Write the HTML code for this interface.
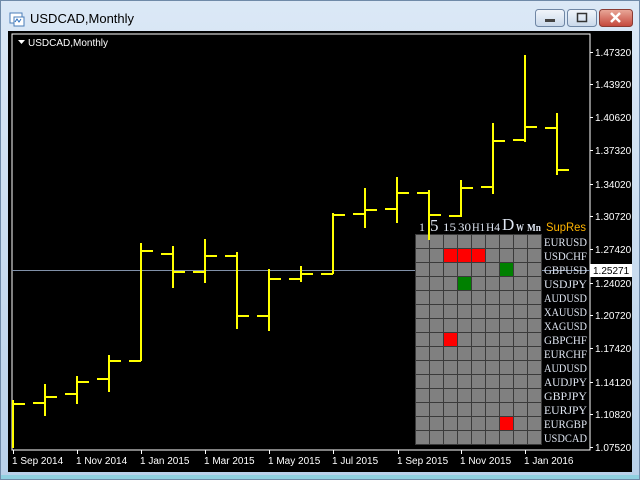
<!DOCTYPE html>
<html><head><meta charset="utf-8"><style>
body{margin:0;width:640px;height:480px;overflow:hidden;background:#c4d8ee;font-family:"Liberation Sans",sans-serif}
</style></head><body>
<svg width="640" height="480" xmlns="http://www.w3.org/2000/svg" style="position:absolute;left:0;top:0">
<defs>
<linearGradient id="tb" x1="0" y1="0" x2="0" y2="1"><stop offset="0" stop-color="#dbe8f6"/><stop offset="1" stop-color="#b9d1ea"/></linearGradient>
<linearGradient id="btn" x1="0" y1="0" x2="0" y2="1"><stop offset="0" stop-color="#f2f6fb"/><stop offset="1" stop-color="#c9d8ea"/></linearGradient>
<linearGradient id="cls" x1="0" y1="0" x2="0" y2="1"><stop offset="0" stop-color="#e9a99a"/><stop offset="1" stop-color="#c4463a"/></linearGradient>
</defs>
<rect x="0" y="0" width="640" height="480" fill="url(#tb)"/>
<rect x="0.5" y="0.5" width="639" height="479" fill="none" stroke="#6f8aa8"/>
<rect x="1" y="475" width="638" height="4" fill="#8fd0e0"/>
<rect x="10" y="13" width="12" height="10" fill="#fff" stroke="#4a7db8"/>
<rect x="14" y="17" width="10" height="9" fill="#fff" stroke="#4a7db8"/>
<path d="M15 22 l2 -3 l2 3 l2 -3" stroke="#2a6fc0" fill="none"/>
<text x="30" y="23" font-size="13" fill="#000">USDCAD,Monthly</text>
<rect x="535.5" y="9.5" width="29" height="17" rx="3" fill="url(#btn)" stroke="#6f86a4"/>
<rect x="545" y="19" width="10" height="3" fill="#444"/>
<rect x="567.5" y="9.5" width="29" height="17" rx="3" fill="url(#btn)" stroke="#6f86a4"/>
<rect x="577.5" y="13.5" width="9" height="8" fill="none" stroke="#333" stroke-width="1.5"/>
<rect x="599.5" y="9.5" width="33" height="17" rx="3" fill="url(#cls)" stroke="#8a3b33"/>
<path d="M611 13 l9 9 M620 13 l-9 9" stroke="#fff" stroke-width="2.5"/>
<rect x="8" y="31" width="624" height="441" fill="#000"/>
<path d="M12 34 H590 V450 H12 Z" fill="none" stroke="#fff" stroke-width="1"/>
<path d="M18 40 h7 l-3.5 4z" fill="#fff"/>
<text x="28" y="46" font-size="10" fill="#fff">USDCAD,Monthly</text>
<line x1="12" y1="270.5" x2="590" y2="270.5" stroke="#8090a8"/>
<rect x="415" y="234" width="127" height="211" fill="#3a3a3a"/>
<g fill="#808080" id="cells"></g>
<g font-family="Liberation Serif,serif" font-size="12" fill="#dfe6f2" id="lbl"></g>
<g font-family="Liberation Serif,serif" fill="#dfe6f2">
<text x="419" y="231" font-size="12">1</text>
<text x="430" y="231" font-size="17">5</text>
<text x="443" y="231" font-size="12" textLength="13" lengthAdjust="spacingAndGlyphs">15</text>
<text x="458" y="231" font-size="12" textLength="13" lengthAdjust="spacingAndGlyphs">30</text>
<text x="472" y="231" font-size="12" textLength="13" lengthAdjust="spacingAndGlyphs">H1</text>
<text x="486" y="231" font-size="12" textLength="14" lengthAdjust="spacingAndGlyphs">H4</text>
<text x="502" y="230" font-size="17">D</text>
<text x="516" y="231" font-size="11" font-weight="bold" textLength="8" lengthAdjust="spacingAndGlyphs">W</text>
<text x="527" y="231" font-size="11" font-weight="bold" textLength="14" lengthAdjust="spacingAndGlyphs">Mn</text>
</g>
<text x="546" y="231" font-size="12" fill="#ffb400" textLength="40" lengthAdjust="spacingAndGlyphs">SupRes</text>
<g stroke="#ffff00" stroke-width="2" fill="none" id="bars"></g>
<g font-size="10" fill="#fff" id="pa"></g>
<rect x="590" y="264" width="42" height="13" fill="#fff"/>
<text x="593" y="274" font-size="10" fill="#000">1.25271</text>
<g font-size="10" fill="#fff">
<text x="12" y="464">1 Sep 2014</text><text x="76" y="464">1 Nov 2014</text><text x="140" y="464">1 Jan 2015</text><text x="204" y="464">1 Mar 2015</text><text x="268" y="464">1 May 2015</text><text x="332" y="464">1 Jul 2015</text><text x="397" y="464">1 Sep 2015</text><text x="460" y="464">1 Nov 2015</text><text x="524" y="464">1 Jan 2016</text>
</g>
<g stroke="#fff" id="dt"></g>
</svg>
<script>
var ns="http://www.w3.org/2000/svg";
function el(p,t,a){var e=document.createElementNS(ns,t);for(var k in a)e.setAttribute(k,a[k]);p.appendChild(e);return e;}
var cells=document.getElementById('cells');
var col={"1,2":"#ff0000","1,3":"#ff0000","1,4":"#ff0000","2,6":"#008000","3,3":"#008000","7,2":"#ff0000","13,6":"#ff0000"};
for(var r=0;r<15;r++)for(var c=0;c<9;c++)el(cells,'rect',{x:416+c*14,y:235+r*14,width:13,height:13,fill:col[r+","+c]||"#808080"});
var lbl=document.getElementById('lbl');
["EURUSD","USDCHF","GBPUSD","USDJPY","AUDUSD","XAUUSD","XAGUSD","GBPCHF","EURCHF","AUDUSD","AUDJPY","GBPJPY","EURJPY","EURGBP","USDCAD"].forEach(function(s,i){var t=el(lbl,'text',{x:544,y:246+i*14,textLength:43,lengthAdjust:"spacingAndGlyphs"});t.textContent=s;});
var bars=[[13,400,448,404,404],[45,384,416,403,397],[77,376,404,394,382],[109,355,392,379,361],[141,243,361,361,251],[173,246,288,254,272],[205,239,283,272,256],[237,252,329,256,316],[269,269,331,316,279],[301,266,282,279,274],[333,213,274,274,215],[365,188,228,214,210],[397,177,223,209,193],[429,190,240,193,215],[461,180,217,216,188],[493,123,194,187,141],[525,55,142,140,127],[557,113,175,128,170]];
var g=document.getElementById('bars');
bars.forEach(function(b){el(g,'line',{x1:b[0],y1:b[1],x2:b[0],y2:b[2]});if(b[0]>13)el(g,'line',{x1:b[0]-12,y1:b[3],x2:b[0],y2:b[3]});el(g,'line',{x1:b[0],y1:b[4],x2:b[0]+12,y2:b[4]});});
var pa=document.getElementById('pa');
var pr=[["1.47320",52],["1.43920",84],["1.40620",117],["1.37320",150],["1.34020",184],["1.30720",216],["1.27420",249],["1.24020",283],["1.20720",315],["1.17420",348],["1.14120",382],["1.10820",414],["1.07520",447]];
pr.forEach(function(p){el(pa,'text',{x:595,y:p[1]+4}).textContent=p[0];el(pa,'line',{x1:590,y1:p[1]+.5,x2:593,y2:p[1]+.5,stroke:"#fff"});});
var dt=document.getElementById('dt');
[13,77,141,205,269,333,398,461,525].forEach(function(x){el(dt,'line',{x1:x+.5,y1:450,x2:x+.5,y2:454});});
</script>
</body></html>
